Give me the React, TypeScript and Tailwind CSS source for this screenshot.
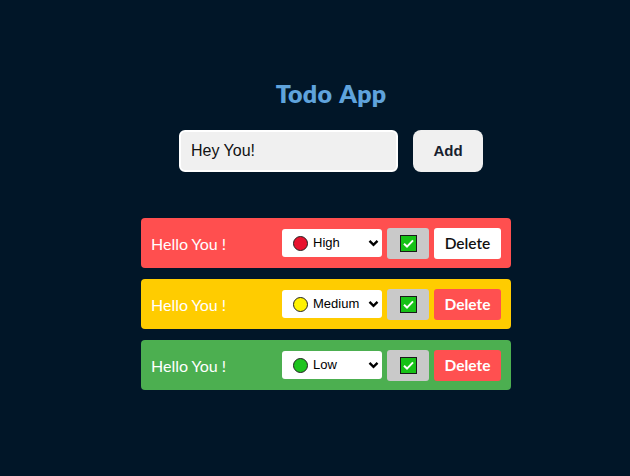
import React from "react";

type Todo = { text: string; priority: string; dot: string; row: string; delWhite: boolean };

const todos: Todo[] = [
  { text: "Hello You !", priority: "High", dot: "bg-[#e8112d]", row: "bg-[#ff4f4f]", delWhite: true },
  { text: "Hello You !", priority: "Medium", dot: "bg-[#fff200]", row: "bg-[#ffcc00]", delWhite: false },
  { text: "Hello You !", priority: "Low", dot: "bg-[#1ec41e]", row: "bg-[#4caf50]", delWhite: false },
];

function Chevron() {
  return (
    <svg width="11" height="8" viewBox="0 0 11 8" className="block">
      <path d="M1.5 1.8 L5.5 5.8 L9.5 1.8" fill="none" stroke="#000" strokeWidth="2.4" />
    </svg>
  );
}

function Check() {
  return (
    <div className="w-[17px] h-[17px] bg-[#16c216] border border-[#1a1a1a] flex items-center justify-center">
      <svg width="13" height="11" viewBox="0 0 13 11" className="block">
        <path d="M2 5.8 L5 8.6 L11 2.4" fill="none" stroke="#fff" strokeWidth="2" />
      </svg>
    </div>
  );
}

export default function App() {
  return (
    <div className="w-[630px] h-[476px] bg-[#011628] overflow-hidden font-['Lato',sans-serif]">
      <div className="ml-[141px] w-[380px] pt-[79px]">
        <h1 className="text-center text-[25px] leading-[28px] font-extrabold text-[#5fa3dc] tracking-[0.2px] [word-spacing:2px]">Todo App</h1>
        <div className="flex justify-center gap-[15px] mt-[23px]">
          <div className="w-[219px] h-[42px] bg-[#f0f0f0] border-2 border-white rounded-[6px] flex items-center pl-[10px] font-['Liberation_Sans',Arial,sans-serif] text-[16px] text-[#111]">
            Hey You!
          </div>
          <div className="w-[70px] h-[42px] bg-[#f0f0f0] rounded-[8px] flex items-center justify-center font-['Liberation_Sans',Arial,sans-serif] font-bold text-[15px] text-[#16202e]">
            Add
          </div>
        </div>
        <div className="mt-[46px] w-[370px] flex flex-col gap-[11px]">
          {todos.map((t, i) => (
            <div key={i} className={`h-[50px] rounded-[4px] flex items-center pl-[10px] pr-[10px] ${t.row}`}>
              <span className="text-white text-[16px] flex-1 pt-[2px]">{t.text}</span>
              <div className="w-[100px] h-[28px] bg-white rounded-[3px] flex items-center pl-[11px] pr-[3px] font-['Liberation_Sans',Arial,sans-serif] text-[13px] text-black">
                <span className={`w-[15px] h-[15px] rounded-full border border-[#222] ${t.dot}`} />
                <span className="ml-[5px] flex-1">{t.priority}</span>
                <Chevron />
              </div>
              <div className="ml-[5px] w-[42px] h-[31px] bg-[#c9c9c9] rounded-[3px] flex items-center justify-center">
                <Check />
              </div>
              <div
                className={`ml-[5px] w-[67px] h-[31px] rounded-[3px] flex items-center justify-center pt-[2px] text-[15.5px] ${
                  t.delWhite ? "bg-white text-[#111] font-semibold" : "bg-[#ff5050] text-white font-bold"
                }`}
              >
                Delete
              </div>
            </div>
          ))}
        </div>
      </div>
    </div>
  );
}
